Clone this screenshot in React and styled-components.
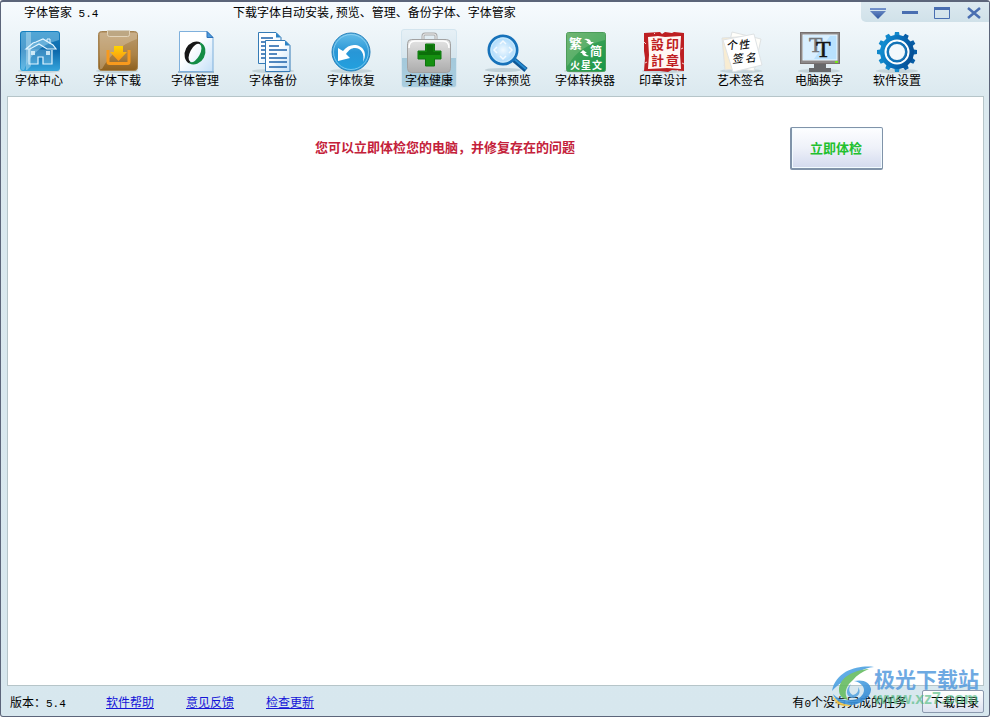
//字体管家 主窗口
import React from 'react'
import styled, { createGlobalStyle } from 'styled-components'

const GlobalStyle = createGlobalStyle`
  * {
    box-sizing: border-box;
  }

  body {
    margin: 0;
    background-color: #fff;
    color: #000;
    font-family: "Noto Sans CJK SC", sans-serif;
    font-size: 12px;
    line-height: 16px;
  }

  button {
    font-family: inherit;
    cursor: pointer;
  }
`

const Window = styled.div`
  min-height: 100vh;
  display: flex;
  flex-direction: column;
  border: 1px solid #5c657a;
  border-top-width: 2px;
  border-radius: 3px;
  background: linear-gradient(#f7fbfe 0px, #dbe9ef 94px, #d7e7ee 100%);
`

const TitleBar = styled.header`
  display: flex;
  align-items: flex-start;
  height: 26px;
  padding-left: 23px;
`

const AppName = styled.h1`
  flex: 0 0 209px;
  margin: 0;
  padding-top: 2px;
  font-size: 12px;
  font-weight: normal;
  line-height: 16px;
`

const Slogan = styled.div`
  flex: 1;
  padding-top: 2px;
`

/*数字*/
const Num = styled.span`
  font-family: "Liberation Mono", monospace;
  font-size: 11px;
  line-height: 12px;
  white-space: pre;
`

const Controls = styled.div`
  display: grid;
  grid-template-columns: repeat(3, 32px) 31px;
  height: 20px;
  padding: 2px 0 0 1px;
  border-bottom-left-radius: 5px;
  background: linear-gradient(#dce9f0, #d0e1e9);
`

const ControlButton = styled.button`
  display: flex;
  align-items: center;
  justify-content: center;
  padding: 0;
  border: none;
  background: none;
`

const Toolbar = styled.nav`
  display: flex;
  gap: 22px;
  padding: 1px 10px 8px;
`

const Tool = styled.button`
  display: flex;
  flex: none;
  flex-direction: column;
  align-items: center;
  width: 56px;
  padding: 0 0 2px;
  border: 1px solid ${(p) => (p.$active ? '#d3e5ef' : 'transparent')};
  border-radius: 3px;
  background: ${(p) => (p.$active ? 'linear-gradient(#e6f0f6, #d5e5ed 50%, #a4c9db 50%, #a9cddf)' : 'none')};
  color: #000;

  svg {
    display: block;
    flex: none;
  }
`

const ToolLabel = styled.span`
  font-size: 12px;
  line-height: 11px;
  white-space: nowrap;
`

const Panel = styled.main`
  flex: 1;
  margin: 0 5px 0 6px;
  padding: 30px 100px 30px 200px;
  border: 1px solid #b6c5c9;
  background-color: #fff;
`

const CheckRow = styled.div`
  display: flex;
  align-items: center;
`

const Notice = styled.p`
  flex: 1;
  margin: 0;
  padding: 0 108px 4px 0;
  color: #c4213a;
  font-size: 13px;
  font-weight: bold;
  line-height: 20px;
  text-align: center;
`

const CheckButton = styled.button`
  width: 93px;
  height: 43px;
  padding: 0 2px 2px 0;
  border: 1px solid #8093a9;
  border-left-width: 2px;
  border-bottom-width: 2px;
  border-radius: 2px;
  background: linear-gradient(#fdfeff, #eef1f9 50%, #d3daee);
  box-shadow: inset 0 0 0 1px #f2fbff;
  color: #22c02e;
  font-size: 13px;
  font-weight: bold;
`

const StatusBar = styled.footer`
  display: flex;
  align-items: center;
  height: 30px;
  padding: 1px 5px 0 9px;
`

const Version = styled.div`
  width: 96px;
`

const Links = styled.div`
  display: flex;
  flex: 1;
  gap: 32px;
`

const FooterLink = styled.a`
  color: #1414d8;
`

const Tasks = styled.div`
  margin-right: 15px;
`

const FolderButton = styled.button`
  width: 62px;
  height: 23px;
  padding: 0 0 1px 4px;
  border: 1px solid #8b99ae;
  border-radius: 2px;
  background: linear-gradient(#fff, #dbe2f0);
  color: #000;
  font-size: 12px;
`

const Watermark = styled.div`
  position: absolute;
  right: 11px;
  bottom: 9px;
  display: flex;
  pointer-events: none;
`

const WatermarkText = styled.div`
  color: #559bdd;
  font-size: 21px;
  font-weight: bold;
  line-height: 24px;
  opacity: 0.85;
`

const WatermarkUrl = styled.div`
  width: 105px;
  color: #48b878;
  font-family: "Liberation Sans", sans-serif;
  font-size: 16px;
  font-weight: bold;
  line-height: 18px;
  opacity: 0.6;
`

const Frame = styled.div`
  position: relative;
`

const GradientDefs = styled.svg`
  position: absolute;
  width: 0;
  height: 0;
`

/*图标*/
function Icon({ children }) {
  return (
    <svg width="44" height="44" viewBox="0 0 44 44" aria-hidden="true">
      {children}
    </svg>
  )
}

function Shadow() {
  return <ellipse cx="22" cy="41" rx="21" ry="2" fill="#8ba3ad" opacity="0.35" />
}

function Gradients() {
  return (
    <GradientDefs aria-hidden="true">
      <defs>
        <linearGradient id="blue" x1="0" y1="0" x2="0" y2="1">
          <stop offset="0" stopColor="#1580bf" />
          <stop offset="0.5" stopColor="#0d69ac" />
          <stop offset="1" stopColor="#35a5dc" />
        </linearGradient>
        <linearGradient id="brown" x1="0" y1="0" x2="0" y2="1">
          <stop offset="0" stopColor="#b99b70" />
          <stop offset="0.6" stopColor="#ab8246" />
          <stop offset="1" stopColor="#8d601e" />
        </linearGradient>
        <linearGradient id="orange" x1="0" y1="0" x2="0" y2="1">
          <stop offset="0" stopColor="#ffd400" />
          <stop offset="1" stopColor="#f89418" />
        </linearGradient>
        <linearGradient id="page" x1="0" y1="0" x2="1" y2="1">
          <stop offset="0.4" stopColor="#ffffff" />
          <stop offset="1" stopColor="#c5e0f8" />
        </linearGradient>
        <linearGradient id="case" x1="0" y1="0" x2="0" y2="1">
          <stop offset="0" stopColor="#e4e4e4" />
          <stop offset="1" stopColor="#acacac" />
        </linearGradient>
        <linearGradient id="ball" x1="0" y1="0" x2="0" y2="1">
          <stop offset="0" stopColor="#64bde9" />
          <stop offset="0.5" stopColor="#2896d6" />
          <stop offset="1" stopColor="#22a1df" />
        </linearGradient>
        <radialGradient id="lens">
          <stop offset="0" stopColor="#f0f9ff" />
          <stop offset="1" stopColor="#a2d5fb" />
        </radialGradient>
        <linearGradient id="green" x1="0" y1="0" x2="1" y2="1">
          <stop offset="0" stopColor="#5aa861" />
          <stop offset="1" stopColor="#159747" />
        </linearGradient>
        <linearGradient id="gear" gradientUnits="userSpaceOnUse" x1="2" y1="0" x2="42" y2="12">
          <stop offset="0" stopColor="#18a0df" />
          <stop offset="0.6" stopColor="#086db8" />
          <stop offset="1" stopColor="#064f95" />
        </linearGradient>
        <linearGradient id="swirl" x1="0" y1="0" x2="1" y2="1">
          <stop offset="0" stopColor="#62b5ed" />
          <stop offset="1" stopColor="#2b82cf" />
        </linearGradient>
        <linearGradient id="control" x1="0" y1="0" x2="0" y2="1">
          <stop offset="0" stopColor="#7795cd" />
          <stop offset="1" stopColor="#2f569f" />
        </linearGradient>
      </defs>
    </GradientDefs>
  )
}

function HomeIcon() {
  return (
    <Icon>
      <Shadow />
      <rect x="3" y="1" width="40" height="40" rx="3" fill="url(#blue)" />
      <path d="M4 4q0-2 2-2h34q2 0 2 2v6Q16 17 7 40H6q-2 0-2-2z" fill="#9ed6f3" opacity="0.45" />
      <path d="M9 2h5v34l-4 4H9z" fill="#d7effa" opacity="0.4" />
      <path d="M9 19 16 13l3-1 7-3 10 6 3 4H30l-8-5-9 5zM12 19v15h9v-7h5v7h9V20" fill="#a0d6f2" fillOpacity="0.3" stroke="#e3f5ff" strokeWidth="1.2" />
      <path d="M30 12V9h3v5" fill="none" stroke="#e3f5ff" />
      <path d="M14 21h4v4h-4zM29 21h4v4h-4z" fill="#e9f9ff" opacity="0.8" />
    </Icon>
  )
}

function DownloadIcon() {
  return (
    <Icon>
      <Shadow />
      <rect x="3.5" y="1.5" width="39" height="39" rx="3" fill="url(#brown)" stroke="#a58351" />
      <path d="M5 3h37v6Q19 17 7 39H5z" fill="#e7d7bd" opacity="0.35" />
      <path d="M12.5 0.5v4q0 2 2 2h18q2 0 2-2v-4" fill="#bda783" stroke="#e3d4ba" />
      <path d="M13 20v12q0 1.5 1.5 1.5h18q1.5 0 1.5-1.5V20" fill="none" stroke="#f79a1d" strokeWidth="3" />
      <path d="M19 16h9v6h4l-8.5 9L15 22h4z" fill="url(#orange)" />
    </Icon>
  )
}

function ManageIcon() {
  return (
    <Icon>
      <path d="M5 41h36v2H5z" fill="#7195b0" opacity="0.6" />
      <path d="M6.5 1.5H34l6 6v34H6.5z" fill="url(#page)" stroke="#7fb0dc" />
      <path d="M34 1.5v6h6z" fill="#4e9cde" stroke="#2d71b9" />
      <g fillRule="evenodd" transform="rotate(28 22 23)">
        <path d="M22 11a10 12 0 1 0 0 24V33a5 10 0 1 1 0-20z" fill="#171717" />
        <path d="M22 11a10 12 0 0 1 0 24V33a5 10 0 1 0 0-20z" fill="#138c45" />
      </g>
    </Icon>
  )
}

function BackupIcon() {
  return (
    <Icon>
      <Shadow />
      <path d="M7.5 2.5H25l5 5v26H7.5z" fill="url(#page)" stroke="#357bb6" />
      <path d="M25 2.5v5h5z" fill="#2d83c5" />
      <path d="M10 8h12M10 12h15M10 16h15M10 20h5M10 24h5M10 28h5" stroke="#1c62aa" strokeWidth="1.5" />
      <path d="M14.5 10.5H34l5 5v26H14.5z" fill="url(#page)" stroke="#357bb6" />
      <path d="M34 10.5v5h5z" fill="#2d83c5" />
      <path d="M18 16h10M18 20h18M18 24h8M18 28h18M18 32h18M18 37h18" stroke="#1c62aa" strokeWidth="1.5" />
    </Icon>
  )
}

function RestoreIcon() {
  return (
    <Icon>
      <Shadow />
      <circle cx="22" cy="22" r="19" fill="url(#ball)" stroke="#267fb9" />
      <circle cx="22" cy="22" r="17.5" fill="none" stroke="#9cd8f5" opacity="0.7" />
      <path d="M34 32c5-9 0-17-9-17-4 0-8 2-11 6l-5-3v13l12-3-4-4c3-4 5-6 9-6 6 0 10 6 8 14z" fill="#fff" />
    </Icon>
  )
}

function HealthIcon() {
  return (
    <Icon>
      <path d="M16 10V6q0-2 2-2h9q2 0 2 2v4" fill="none" stroke="#aaa" strokeWidth="3" />
      <path d="M16 9V6q0-2 2-2h9q2 0 2 2v3" fill="none" stroke="#f1f1f1" />
      <rect x="0.5" y="9.5" width="43" height="33" rx="4" fill="url(#case)" stroke="#a2a2a2" />
      <path d="M2 18q0-7 6-7h28q6 0 6 7" fill="none" stroke="#fff" strokeWidth="1.5" />
      <path d="M18.5 14h9v7H34v8h-6.5v7h-9v-7H11v-8h7.5z" fill="#159010" stroke="#0f7610" />
      <path d="M19.5 15h7v7H33v3H12v-3h7.5z" fill="#075e08" opacity="0.65" />
    </Icon>
  )
}

function PreviewIcon() {
  return (
    <Icon>
      <ellipse cx="18" cy="40" rx="18" ry="2" fill="#8ba3ad" opacity="0.4" />
      <path d="m28 29 13 11" stroke="#0f5795" strokeWidth="5" />
      <path d="m28 28 13 11" stroke="#278cd1" strokeWidth="2" />
      <circle cx="18" cy="20" r="14" fill="url(#lens)" stroke="#1772ba" strokeWidth="3" />
      <circle cx="18" cy="20" r="12" fill="none" stroke="#c4e7fc" strokeWidth="1.5" />
      <path d="m15 14 3-3 3 3M15 26l3 3 3-3M12 17l-3 3 3 3M24 17l3 3-3 3" fill="none" stroke="#fff" strokeWidth="1.5" opacity="0.8" />
    </Icon>
  )
}

function ConvertIcon() {
  return (
    <Icon>
      <Shadow />
      <rect x="3.5" y="2.5" width="39" height="39" rx="2" fill="url(#green)" stroke="#4d9c5a" />
      <path d="M4 3h38v7Q16 16 6 34l-2 2z" fill="#b9dfa9" opacity="0.25" />
      <g fill="#fff" fontWeight="bold">
        <text x="6" y="18" fontSize="13">繁</text>
        <text x="27" y="26" fontSize="12">简</text>
        <text x="7" y="39" fontSize="10">火</text>
        <text x="18" y="39" fontSize="10">星</text>
        <text x="29" y="39" fontSize="10">文</text>
      </g>
      <path d="M21 9q6-1 7 3h3l-4 3-4-3h2q-1-2-4-3zM26 26q-6 1-7-3h-2l3-3 4 3h-2q1 2 4 3z" fill="#fff" />
    </Icon>
  )
}

function SealIcon() {
  return (
    <Icon>
      <Shadow />
      <path d="M3 3 19 2l2 2 3-2 7 1 2-1 10 1v38l-12-1-4 2-8-1H3l1-13-1-7z" fill="#bd1f22" />
      <path d="M7 7l10-1 7 1 16-1-1 18 1 15-14-1-19 1 1-14z" fill="#fff7f4" />
      <path d="M3 12l2 2M42 18l-2 1M4 33l2-1M41 33l2 1M13 3l1 1M36 40l1 2" stroke="#f4d2cf" />
      <g fill="#c01d21" fontSize="13" fontWeight="bold">
        <text x="10" y="19">設</text>
        <text x="25" y="19">印</text>
        <text x="10" y="35">計</text>
        <text x="25" y="35">章</text>
      </g>
    </Icon>
  )
}

function SignatureIcon() {
  return (
    <Icon>
      <Shadow />
      <path d="m13 2 29 7-7 32-30-5z" fill="#fffefa" stroke="#dfe2e3" />
      <path d="m3 8 31-2 3 31-31 3z" fill="#f8ecd2" stroke="#dfe2e3" />
      <path d="m4 10 31-6 8 31-29 7z" fill="#fff" stroke="#dfe3e5" />
      <g fill="#111" fontSize="11" fontWeight="500" fontStyle="italic" transform="rotate(-7 22 22)">
        <text x="8" y="18">个</text>
        <text x="20" y="19">性</text>
        <text x="12" y="32">签</text>
        <text x="25" y="33">名</text>
      </g>
    </Icon>
  )
}

function MonitorIcon() {
  return (
    <Icon>
      <Shadow />
      <path d="M17 34h12v4h5v4H12v-4h5z" fill="#68696b" />
      <rect x="3.5" y="2.5" width="39" height="31" fill="#8d8989" stroke="#77706f" />
      <rect x="6" y="5" width="34" height="25" fill="#b9e1fe" stroke="#eff9ff" />
      <path d="M7 6h26L17 29H7z" fill="#e9f6ff" opacity="0.65" />
      <g fontFamily="Liberation Serif, serif" strokeWidth="0.6">
        <text x="12" y="22" fontSize="22" fill="#75777b" stroke="#75777b">T</text>
        <text x="19" y="27" fontSize="24" fill="#171717" stroke="#171717">T</text>
      </g>
      <path d="M38 31h3v2h-3z" fill="#76e719" />
    </Icon>
  )
}

function SettingsIcon() {
  const teeth = Array.from({ length: 12 }, (_, i) => i * 30)
  return (
    <Icon>
      <Shadow />
      {teeth.map((angle) => (
        <path key={angle} d="M19 8 20 2h4l1 6z" fill={angle > 20 && angle < 170 ? '#075da6' : '#1188cb'} transform={`rotate(${angle} 22 22)`} />
      ))}
      <circle cx="22" cy="22" r="12.5" fill="none" stroke="url(#gear)" strokeWidth="9" />
      <circle cx="22" cy="22" r="11.5" fill="none" stroke="#fff" strokeWidth="2" />
      <circle cx="22" cy="22" r="9" fill="#f2f8fc" stroke="#1673b5" strokeWidth="2" />
    </Icon>
  )
}

function MenuGlyph() {
  return (
    <svg width="16" height="12" viewBox="0 0 16 12" fill="url(#control)">
      <path d="M0 1h16v2H0zM0 4h16l-8 8z" />
    </svg>
  )
}

function MinimizeGlyph() {
  return (
    <svg width="16" height="12" viewBox="0 0 16 12">
      <rect y="4" width="16" height="3" fill="#496eb1" />
    </svg>
  )
}

function MaximizeGlyph() {
  return (
    <svg width="16" height="12" viewBox="0 0 16 12">
      <path d="M0.5 0.5h15v11h-15z" fill="none" stroke="#496eb1" />
      <path d="M0 0h16v3H0z" fill="#496eb1" />
    </svg>
  )
}

function CloseGlyph() {
  return (
    <svg width="14" height="12" viewBox="0 0 14 12">
      <path d="m1 1 12 10M13 1 1 11" stroke="#496eb1" strokeWidth="2.5" />
    </svg>
  )
}

function WatermarkLogo() {
  return (
    <svg width="43" height="42" viewBox="0 0 43 42" opacity="0.9" aria-hidden="true">
      <path d="M43 1C28-1 5 4 1 25c7-8 13-11 18-12C24 7 32 2 43 1z" fill="url(#swirl)" />
      <path d="M38 3C22 4 8 12 8 24c0 6 4 9 9 10-5-8-1-15 5-20 4-5 9-8 16-11z" fill="#67bc62" />
      <path d="M23 15c9-2 16 1 17 8 0 9-12 17-23 16-8-1-13-5-15-11 5 5 11 7 17 6 9 0 14-5 14-10 0-4-4-8-10-9z" fill="url(#swirl)" />
      <path d="M20 18c-3 5-2 9 2 11 4-1 6-4 5-8 4 5 0 11-6 11-6-1-7-9-1-14z" fill="#5aa6e0" />
      <path d="M1 29c4 6 11 10 20 10-7 3-17 1-20-10z" fill="#f3c94d" />
    </svg>
  )
}

const tools = [
  { label: '字体中心', icon: HomeIcon },
  { label: '字体下载', icon: DownloadIcon },
  { label: '字体管理', icon: ManageIcon },
  { label: '字体备份', icon: BackupIcon },
  { label: '字体恢复', icon: RestoreIcon },
  { label: '字体健康', icon: HealthIcon, active: true },
  { label: '字体预览', icon: PreviewIcon },
  { label: '字体转换器', icon: ConvertIcon },
  { label: '印章设计', icon: SealIcon },
  { label: '艺术签名', icon: SignatureIcon },
  { label: '电脑换字', icon: MonitorIcon },
  { label: '软件设置', icon: SettingsIcon },
]

const links = ['软件帮助', '意见反馈', '检查更新']

export default function App() {
  return (
    <Frame>
      <GlobalStyle />
      <Gradients />
      <Window>
        <TitleBar>
          <AppName>字体管家<Num> 5.4</Num></AppName>
          <Slogan>下载字体自动安装<Num>,</Num>预览、管理、备份字体、字体管家</Slogan>
          <Controls>
            <ControlButton aria-label="菜单"><MenuGlyph /></ControlButton>
            <ControlButton aria-label="最小化"><MinimizeGlyph /></ControlButton>
            <ControlButton aria-label="最大化"><MaximizeGlyph /></ControlButton>
            <ControlButton aria-label="关闭"><CloseGlyph /></ControlButton>
          </Controls>
        </TitleBar>

        <Toolbar>
          {tools.map(({ label, icon: ToolIcon, active }) => (
            <Tool key={label} $active={active}>
              <ToolIcon />
              <ToolLabel>{label}</ToolLabel>
            </Tool>
          ))}
        </Toolbar>

        <Panel>
          <CheckRow>
            <Notice>您可以立即体检您的电脑，并修复存在的问题</Notice>
            <CheckButton>立即体检</CheckButton>
          </CheckRow>
        </Panel>

        <StatusBar>
          <Version>版本：<Num>5.4</Num></Version>
          <Links>
            {links.map((text) => (
              <FooterLink key={text} href="#">{text}</FooterLink>
            ))}
          </Links>
          <Tasks>有<Num>0</Num>个没有完成的任务</Tasks>
          <FolderButton>下载目录</FolderButton>
        </StatusBar>
      </Window>

      <Watermark>
        <WatermarkLogo />
        <div>
          <WatermarkText>极光下载站</WatermarkText>
          <WatermarkUrl>www.xz7.com</WatermarkUrl>
        </div>
      </Watermark>
    </Frame>
  )
}
